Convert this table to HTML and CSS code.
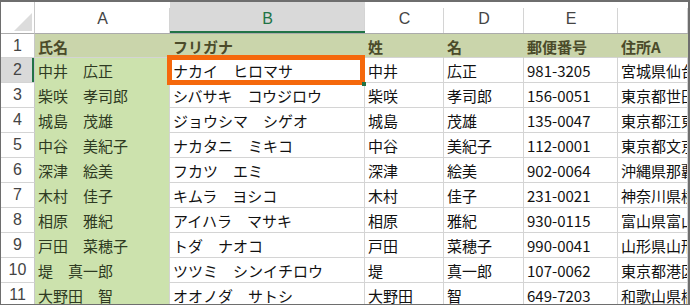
FILE: index.html
```html
<!DOCTYPE html>
<html>
<head>
    <meta charset="utf-8">
    <title>名簿</title>
    <link rel="stylesheet" href="styles.css">
</head>
<body>
    <div class="sheet">
        <!-- column headers -->
        <div class="corner">
            <svg width="33" height="31" viewBox="0 0 33 31"><polygon points="31,11 31,29 13,29" fill="#dcdcdc"/></svg>
        </div>
        <div class="col-head">A</div>
        <div class="col-head is-active">B</div>
        <div class="col-head">C</div>
        <div class="col-head">D</div>
        <div class="col-head">E</div>
        <div class="col-head"></div>

        <!-- header row -->
        <div class="row-head">1</div>
        <div class="cell title">氏名</div>
        <div class="cell title">フリガナ</div>
        <div class="cell title">姓</div>
        <div class="cell title">名</div>
        <div class="cell title">郵便番号</div>
        <div class="cell title">住所A</div>

        <div class="row-head is-active">2</div>
        <div class="cell name">中井　広正</div>
        <div class="cell">ナカイ　ヒロマサ</div>
        <div class="cell">中井</div>
        <div class="cell">広正</div>
        <div class="cell">981-3205</div>
        <div class="cell">宮城県仙台市青葉区</div>

        <div class="row-head">3</div>
        <div class="cell name">柴咲　孝司郎</div>
        <div class="cell">シバサキ　コウジロウ</div>
        <div class="cell">柴咲</div>
        <div class="cell">孝司郎</div>
        <div class="cell">156-0051</div>
        <div class="cell">東京都世田谷区</div>

        <div class="row-head">4</div>
        <div class="cell name">城島　茂雄</div>
        <div class="cell">ジョウシマ　シゲオ</div>
        <div class="cell">城島</div>
        <div class="cell">茂雄</div>
        <div class="cell">135-0047</div>
        <div class="cell">東京都江東区</div>

        <div class="row-head">5</div>
        <div class="cell name">中谷　美紀子</div>
        <div class="cell">ナカタニ　ミキコ</div>
        <div class="cell">中谷</div>
        <div class="cell">美紀子</div>
        <div class="cell">112-0001</div>
        <div class="cell">東京都文京区</div>

        <div class="row-head">6</div>
        <div class="cell name">深津　絵美</div>
        <div class="cell">フカツ　エミ</div>
        <div class="cell">深津</div>
        <div class="cell">絵美</div>
        <div class="cell">902-0064</div>
        <div class="cell">沖縄県那覇市</div>

        <div class="row-head">7</div>
        <div class="cell name">木村　佳子</div>
        <div class="cell">キムラ　ヨシコ</div>
        <div class="cell">木村</div>
        <div class="cell">佳子</div>
        <div class="cell">231-0021</div>
        <div class="cell">神奈川県横浜市</div>

        <div class="row-head">8</div>
        <div class="cell name">相原　雅紀</div>
        <div class="cell">アイハラ　マサキ</div>
        <div class="cell">相原</div>
        <div class="cell">雅紀</div>
        <div class="cell">930-0115</div>
        <div class="cell">富山県富山市</div>

        <div class="row-head">9</div>
        <div class="cell name">戸田　菜穂子</div>
        <div class="cell">トダ　ナオコ</div>
        <div class="cell">戸田</div>
        <div class="cell">菜穂子</div>
        <div class="cell">990-0041</div>
        <div class="cell">山形県山形市</div>

        <div class="row-head">10</div>
        <div class="cell name">堤　真一郎</div>
        <div class="cell">ツツミ　シンイチロウ</div>
        <div class="cell">堤</div>
        <div class="cell">真一郎</div>
        <div class="cell">107-0062</div>
        <div class="cell">東京都港区</div>

        <div class="row-head">11</div>
        <div class="cell name">大野田　智</div>
        <div class="cell">オオノダ　サトシ</div>
        <div class="cell">大野田</div>
        <div class="cell">智</div>
        <div class="cell">649-7203</div>
        <div class="cell">和歌山県橋本市</div>

        <!-- active cell frame on B2 -->
        <div class="selection"><span class="handle"></span></div>
    </div>
</body>
</html>
```

FILE: styles.css
```css
body {
    margin: 0;
    background: #fff;
    font-family: "Noto Sans CJK JP", sans-serif;
}
.sheet {
    position: relative;
    display: grid;
    grid-template-columns: 34px 135px 195px 79px 80px 94px 70px;
    grid-template-rows: 32px 24px repeat(10, 25px);
    width: 690px;
    height: 305px;
    box-sizing: border-box;
    border-style: solid;
    border-color: #6e6e6e;
    border-width: 2px 2px 1px 1px;
    overflow: hidden;
}
.corner {
    background: #fff;
    border-right: 1px solid #c8c8c8;
    border-bottom: 1px solid #ababab;
}
.corner svg {
    display: block;
}
.col-head {
    display: flex;
    align-items: center;
    justify-content: center;
    padding-top: 3px;
    font-family: "Liberation Sans", sans-serif;
    font-size: 16px;
    color: #444;
    background: linear-gradient(#d4d4d4, #d4d4d4) right bottom / 1px 25px no-repeat, #fff;
    border-bottom: 1px solid #ababab;
}
.col-head.is-active {
    color: #217346;
    background: linear-gradient(#d4d4d4, #d4d4d4) right bottom / 1px 25px no-repeat, #d9d9d9;
    box-shadow: inset 0 -2px 0 #217346;
}
.row-head {
    display: flex;
    align-items: center;
    justify-content: center;
    font-family: "Liberation Sans", sans-serif;
    font-size: 16px;
    color: #444;
    background: #fff;
    border-right: 1px solid #c8c8c8;
    border-bottom: 1px solid #d4d4d4;
}
.row-head.is-active {
    background: #d9d9d9;
    box-shadow: inset -2px 0 0 #217346;
}
.cell {
    display: flex;
    align-items: center;
    padding: 1px 0 0 3px;
    font-size: 15px;
    color: #111;
    white-space: nowrap;
    overflow: hidden;
    border-right: 1px solid #d4d4d4;
    border-bottom: 1px solid #d4d4d4;
}
.cell.title {
    font-weight: bold;
    color: #4b4b2a;
    background: #cad5ab;
    border-right-color: #cad5ab;
}
.cell.name {
    color: #2e3a22;
    background: #cce2ad;
    border-color: #cce2ad;
    border-right-color: #d4d4d4;
}
.selection {
    position: absolute;
    left: 166px;
    top: 53px;
    width: 198px;
    height: 30px;
    box-sizing: border-box;
    border: 5px solid #f5680c;
}
.handle {
    position: absolute;
    right: -6px;
    bottom: -6px;
    width: 4px;
    height: 4px;
    background: #217346;
}
```
